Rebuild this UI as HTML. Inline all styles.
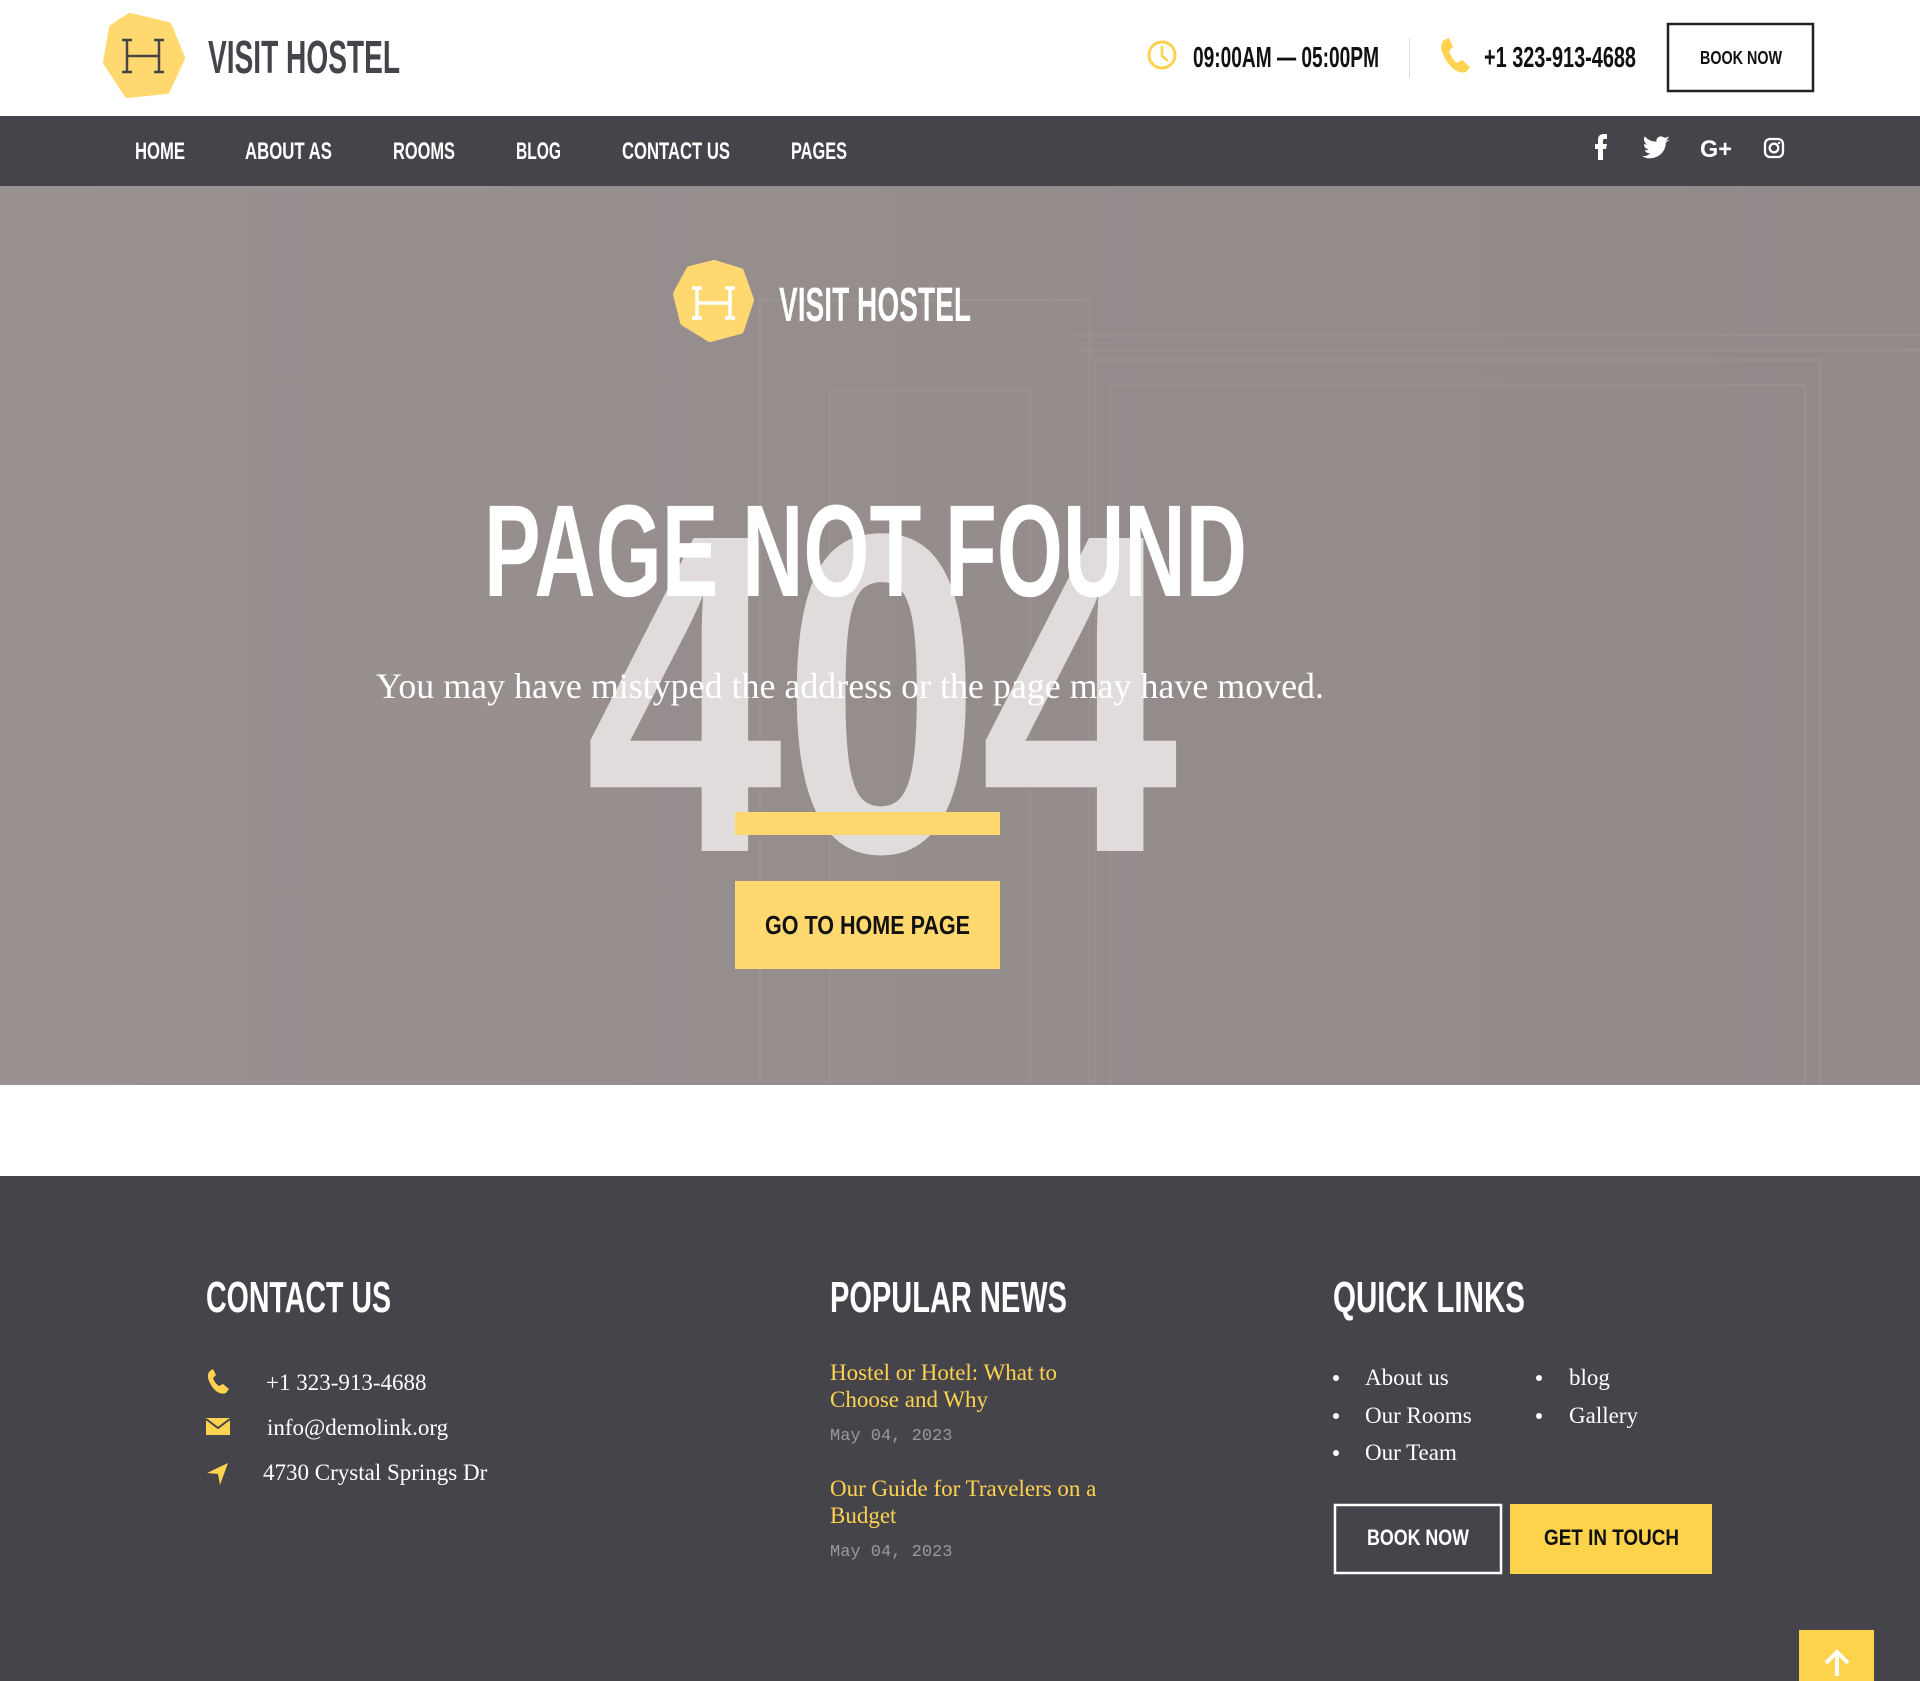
<!DOCTYPE html>
<html><head><meta charset="utf-8"><style>
html,body{margin:0;padding:0;background:#fff;}
svg{display:block;}
.c{font-family:"Liberation Sans",sans-serif;font-weight:bold;}
.s{font-family:"Liberation Serif",serif;}
.m{font-family:"Liberation Mono",monospace;}
</style></head><body>
<svg width="1920" height="1681" viewBox="0 0 1920 1681" xmlns="http://www.w3.org/2000/svg">
<defs>
<linearGradient id="hg" x1="0" y1="0" x2="1" y2="0">
<stop offset="0" stop-color="#9a9291"/><stop offset="0.5" stop-color="#958d8c"/><stop offset="1" stop-color="#928a89"/>
</linearGradient>
<clipPath id="hc"><rect x="0" y="186" width="1920" height="899"/></clipPath>
</defs>
<!-- header -->
<rect x="0" y="0" width="1920" height="116" fill="#fff"/>
<path d="M130 17 L168 26 L181 58 L166 90 L128 94 L107 62 L113 28 Z" fill="#ffd970" stroke="#ffd970" stroke-width="8" stroke-linejoin="round"/>
<g stroke="#45444a" stroke-width="2.5" fill="none"><path d="M127 40 V72 M159 40 V72 M127 56 H159 M122 40 H132 M154 40 H164 M122 72 H132 M154 72 H164"/></g>
<text class="c" x="208" y="73" font-size="46" fill="#45444a" textLength="192" lengthAdjust="spacingAndGlyphs">VISIT HOSTEL</text>
<circle cx="1162" cy="55" r="13" fill="none" stroke="#ffd24f" stroke-width="3"/>
<path d="M1162 46 V56 L1168 61" stroke="#ffd24f" stroke-width="2.5" fill="none"/>
<text class="c" x="1193" y="67" font-size="29" fill="#111" textLength="186" lengthAdjust="spacingAndGlyphs">09:00AM — 05:00PM</text>
<rect x="1409" y="38" width="1" height="40" fill="#ddd"/>
<path d="M1444 40 C1440 44 1440 50 1446 60 C1452 70 1460 74 1466 72 L1470 67 L1462 60 L1457 63 C1453 60 1450 55 1449 51 L1453 47 L1449 38 Z" fill="#ffd24f"/>
<text class="c" x="1484" y="67" font-size="29" fill="#111" textLength="152" lengthAdjust="spacingAndGlyphs">+1 323-913-4688</text>
<rect x="1668" y="24" width="145" height="67" fill="#fff" stroke="#222" stroke-width="2.5"/>
<text class="c" x="1700" y="64" font-size="18" fill="#111" textLength="82" lengthAdjust="spacingAndGlyphs">BOOK NOW</text>
<!-- nav -->
<rect x="0" y="116" width="1920" height="70" fill="#45444a"/>
<g class="c" font-size="24" fill="#fff">
<text x="135" y="159" textLength="50" lengthAdjust="spacingAndGlyphs">HOME</text>
<text x="245" y="159" textLength="87" lengthAdjust="spacingAndGlyphs">ABOUT AS</text>
<text x="393" y="159" textLength="62" lengthAdjust="spacingAndGlyphs">ROOMS</text>
<text x="516" y="159" textLength="45" lengthAdjust="spacingAndGlyphs">BLOG</text>
<text x="622" y="159" textLength="108" lengthAdjust="spacingAndGlyphs">CONTACT US</text>
<text x="791" y="159" textLength="56" lengthAdjust="spacingAndGlyphs">PAGES</text>
</g>
<path d="M1598 160 V149 H1595 V144 H1598 V140 C1598 136 1600 134 1604 134 H1607 V139 H1605 C1603 139 1603 140 1603 141 V144 H1607 L1606 149 H1603 V160 Z" fill="#fff"/>
<g transform="translate(1644,137) scale(0.78)">
<path d="M34 3 C32 4 30 4 28 5 C30 3 31 1 32 -1 C30 0 28 1 26 1 C22 -3 15 0 16 6 C9 6 4 3 1 -1 C-1 3 0 7 4 10 C2 10 1 9 0 9 C0 13 2 15 6 16 C4 17 3 17 1 17 C2 20 5 21 8 21 C5 24 1 25 -3 24 C1 27 6 28 11 27 C22 25 28 16 28 7 C30 6 32 4 34 3 Z" fill="#fff"/>
</g>
<text class="c" x="1700" y="157" font-size="24" fill="#fff" textLength="32" lengthAdjust="spacingAndGlyphs">G+</text>
<rect x="1765" y="139" width="18" height="18" rx="5" fill="none" stroke="#fff" stroke-width="2.3"/>
<circle cx="1774" cy="148" r="4.3" fill="none" stroke="#fff" stroke-width="2.3"/>
<circle cx="1779" cy="143" r="1.2" fill="#fff"/>
<!-- hero -->
<rect x="0" y="186" width="1920" height="899" fill="url(#hg)"/>
<g clip-path="url(#hc)" fill="none" stroke="#a09897" stroke-width="3" opacity="0.45">
<rect x="1095" y="360" width="725" height="740"/>
<rect x="1110" y="385" width="695" height="720"/>
<rect x="830" y="390" width="200" height="720"/>
<rect x="760" y="300" width="330" height="800"/>
<path d="M1070 335 H1920 M1080 350 H1920"/>
</g>
<path d="M714 264 L740 272 L750 300 L740 330 L710 338 L684 322 L677 294 L690 270 Z" fill="#ffd970" stroke="#ffd970" stroke-width="8" stroke-linejoin="round"/>
<g stroke="#fff" stroke-width="3.5" fill="none"><path d="M697 288 V318 M730 288 V318 M697 303 H730 M692 288 H702 M725 288 H735 M692 318 H702 M725 318 H735"/></g>
<text class="c" x="779" y="321" font-size="48" fill="#fff" textLength="192" lengthAdjust="spacingAndGlyphs">VISIT HOSTEL</text>
<text class="c" x="585" y="851" font-size="455" fill="#e1dcdc" font-weight="normal" textLength="593" lengthAdjust="spacingAndGlyphs">404</text>
<text class="c" x="484" y="596" font-size="131" fill="#fff" textLength="763" lengthAdjust="spacingAndGlyphs">PAGE NOT FOUND</text>
<text class="s" x="376" y="698" font-size="36" fill="#fff" textLength="948" lengthAdjust="spacingAndGlyphs">You may have mistyped the address or the page may have moved.</text>
<rect x="735" y="812" width="265" height="23" fill="#ffd970"/>
<rect x="735" y="881" width="265" height="88" fill="#ffd970"/>
<text class="c" x="765" y="934" font-size="26" fill="#111" textLength="205" lengthAdjust="spacingAndGlyphs">GO TO HOME PAGE</text>
<!-- footer -->
<rect x="0" y="1176" width="1920" height="505" fill="#45444a"/>
<g class="c" font-size="44" fill="#fff">
<text x="206" y="1312" textLength="185" lengthAdjust="spacingAndGlyphs">CONTACT US</text>
<text x="830" y="1312" textLength="237" lengthAdjust="spacingAndGlyphs">POPULAR NEWS</text>
<text x="1333" y="1312" textLength="192" lengthAdjust="spacingAndGlyphs">QUICK LINKS</text>
</g>
<path d="M210 1371 C207 1374 207 1378 211 1385 C215 1392 221 1395 226 1393 L229 1389 L223 1384 L219 1386 C216 1384 214 1381 213 1378 L216 1375 L213 1369 Z" fill="#ffd24f"/>
<rect x="206" y="1418" width="24" height="17" fill="#ffd24f"/>
<path d="M206 1419 L218 1428 L230 1419" fill="none" stroke="#45444a" stroke-width="2"/>
<path d="M207 1473 L228 1463 L220 1485 L218 1474 Z" fill="#ffd24f"/>
<g class="s" font-size="23" fill="#fff">
<text x="266" y="1390">+1 323-913-4688</text>
<text x="267" y="1435">info@demolink.org</text>
<text x="263" y="1480">4730 Crystal Springs Dr</text>
</g>
<g class="s" font-size="23" fill="#ffd24f">
<text x="830" y="1380">Hostel or Hotel: What to</text>
<text x="830" y="1407">Choose and Why</text>
<text x="830" y="1496">Our Guide for Travelers on a</text>
<text x="830" y="1523">Budget</text>
</g>
<g class="m" font-size="17" fill="#9a9a9a">
<text x="830" y="1440">May 04, 2023</text>
<text x="830" y="1556">May 04, 2023</text>
</g>
<g fill="#fff"><circle cx="1336" cy="1378" r="3"/><circle cx="1336" cy="1416" r="3"/><circle cx="1336" cy="1453" r="3"/><circle cx="1539" cy="1378" r="3"/><circle cx="1539" cy="1416" r="3"/></g>
<g class="s" font-size="23" fill="#fff">
<text x="1365" y="1385">About us</text>
<text x="1365" y="1423">Our Rooms</text>
<text x="1365" y="1460">Our Team</text>
<text x="1569" y="1385">blog</text>
<text x="1569" y="1423">Gallery</text>
</g>
<rect x="1335" y="1505" width="166" height="68" fill="none" stroke="#fff" stroke-width="2.5"/>
<text class="c" x="1367" y="1545" font-size="22" fill="#fff" textLength="102" lengthAdjust="spacingAndGlyphs">BOOK NOW</text>
<rect x="1510" y="1504" width="202" height="70" fill="#fdd34c"/>
<text class="c" x="1544" y="1545" font-size="22" fill="#111" textLength="135" lengthAdjust="spacingAndGlyphs">GET IN TOUCH</text>
<rect x="1799" y="1630" width="75" height="60" fill="#fdd34c"/>
<path d="M1837 1676 V1652 M1826 1663 L1837 1652 L1848 1663" stroke="#fff" stroke-width="4" fill="none"/>
</svg>
</body></html>
